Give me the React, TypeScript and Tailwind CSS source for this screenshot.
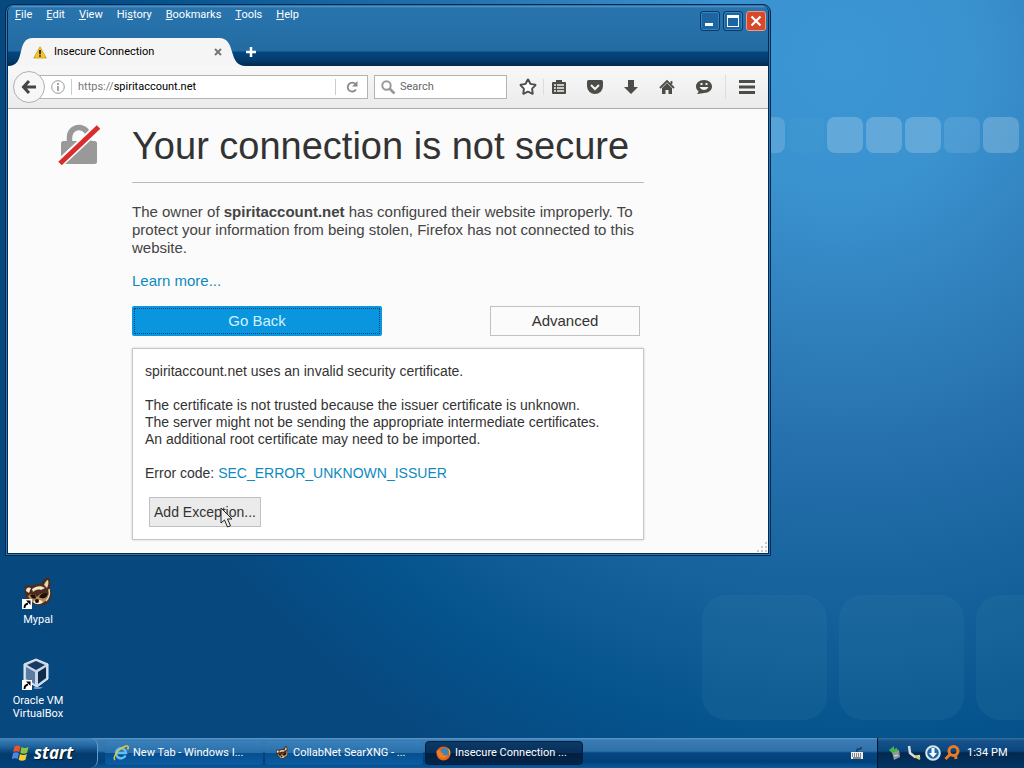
import React from "react";
import { Star } from "lucide-react";

const menuItems = ["File", "Edit", "View", "History", "Bookmarks", "Tools", "Help"];
const underlined = [0, 0, 0, 2, 0, 0, 0];

const tiles = [
  "bg-white/15",
  "bg-white/2",
  "bg-white/20",
  "bg-white/20",
  "bg-white/20",
  "bg-white/10",
  "bg-white/20",
];

function WarningIcon() {
  return (
    <svg width="14" height="13" viewBox="0 0 14 13">
      <path d="M7 .8 13.3 12H.7Z" fill="#f7c52b" stroke="#c99a1c" strokeWidth=".8" strokeLinejoin="round" />
      <path d="M7 4v4.2M7 9.2v1.6" stroke="#222" strokeWidth="1.8" />
    </svg>
  );
}

function BrokenLock() {
  return (
    <svg width="42" height="42" viewBox="0 0 42 42">
      <path d="M11.500 20v-7a9.500 9.500 0 0 1 19 0v7" fill="none" stroke="#999" strokeWidth="5.500" />
      <rect x="3" y="17" width="36" height="23" rx="2.500" fill="#999" />
      <path d="M1.500 39.500 40.500 3" stroke="#fbfbfb" strokeWidth="8.500" />
      <path d="M2 39.500 40.500 3" stroke="#d92d2d" strokeWidth="5" />
    </svg>
  );
}

function Raccoon({ size }: { size: number }) {
  return (
    <svg width={size} height={size} viewBox="0 0 32 32">
      <path d="M3 13c-1-5 3-6 7-4 3-2 6-3 9-2 2-4 5-7 8-6 2 3 1 7 1 10 3 6 1 13-4 16-6 3-13 1-16-3C4 21 2 18 3 13Z" fill="#4a2d1a" />
      <path d="M22 8c1-3 3-5 4-5 1 3 0 6-1 8Z" fill="#e8d2b4" />
      <path d="M4 14c0-4 3-4 5-3l-2 5ZM10 12c4-3 9-4 13-1l-4 2c-3-1-6 0-8 2Z" fill="#f1e3cc" />
      <path d="M6 19c4-4 7-1 9 1 3-4 8-5 12-2-2 6-6 9-11 9-4 0-8-3-10-8Z" fill="#b98a58" />
      <path d="M8 18c3-2 6 0 6 3-2 2-5 0-6-3ZM17 20c2-4 6-5 9-3-1 4-5 6-9 3Z" fill="#1d120b" />
      <path d="M11 25c3-3 7-3 10 0-3 3-7 3-10 0Z" fill="#f4ead9" />
      <path d="M27 12c1 5 0 9-3 12" fill="none" stroke="#ead9bd" strokeWidth="1.500" />
      <circle cx="15" cy="24" r="2" fill="#160d08" />
    </svg>
  );
}

function VirtualBoxIcon() {
  return (
    <svg width="32" height="32" viewBox="0 0 32 32">
      <path d="m14 1 12 5v15l-11 8-13-7V6Z" fill="#c9d7ea" stroke="#e7eff8" />
      <path d="m14 3 9 4-9 5-9-5Z" fill="#173a5e" />
      <path d="m4 9 9 5v12l-9-5Z" fill="#5b7ba0" />
      <path d="m16 14 8-5v11l-8 6Z" fill="#102c4b" />
      <path d="M12 29h9l-3 2h-6Z" fill="#7295c4" />
    </svg>
  );
}

function ShortcutArrow() {
  return (
    <svg className="absolute bottom-0 left-0" width="10" height="10" viewBox="0 0 10 10">
      <path d="M0 0h10v10H0Z" fill="#fff" />
      <path d="M2.500 9c0-3 1-4 3.500-4.500" stroke="#000" strokeWidth="1.800" fill="none" />
      <path d="M4 1.500h4.500V6Z" fill="#000" />
    </svg>
  );
}

function WindowsFlag() {
  return (
    <svg width="18" height="18" viewBox="0 0 18 18">
      <path d="M2.500 2.500c2-1.300 4-1.300 6 0L7.200 8.300c-2-1.300-4-1.300-6 0Z" fill="#e8532c" />
      <path d="M9.500 3c2 1.300 4.500 1.300 7 0l-1.400 5.800c-2.300 1.200-4.700 1.200-6.800 0Z" fill="#8cc63e" />
      <path d="M1 9.300c2-1.300 4-1.300 6 0l-1.300 5.800c-2-1.300-4-1.300-6 0Z" fill="#4c86e0" />
      <path d="M8 9.900c2 1.300 4.500 1.300 6.900 0l-1.400 5.800c-2.300 1.300-4.800 1.300-6.900 0Z" fill="#f8cd2e" />
    </svg>
  );
}

function IeIcon() {
  return (
    <svg width="16" height="16" viewBox="0 0 16 16">
      <path d="M12.500 10.500A5 5 0 1 1 13 8H4.500" fill="none" stroke="#63c0f2" strokeWidth="2.500" />
      <path d="M2 15C-1 12 6 3 13 1c2-.5 3 1 1.500 3.500" fill="none" stroke="#f2c231" strokeWidth="1.500" />
    </svg>
  );
}

function FirefoxIcon() {
  return (
    <svg width="15" height="15" viewBox="0 0 16 16">
      <circle cx="8" cy="8" r="7.500" fill="#e3611d" />
      <circle cx="9" cy="7" r="4.800" fill="#3f83b5" />
      <path d="M1 4c1 1 2 0 4 1 0 2 1 2 3 3-1 2 2 3 5 1-1 3-4 5-7 4C2 12 0 8 1 4Z" fill="#ef7d22" />
      <path d="M11 2c3 1 4 5 3 8 2-2 2-7-3-8Z" fill="#f9c52e" />
    </svg>
  );
}

function TitleBar() {
  return (
    <header className="flex h-[60px] flex-col rounded-t-md bg-[linear-gradient(#5599cb_0px,#2a74ae_2px,#2671a9_22px,#236ba1_45px,#044681_46px,#033c6d_54px,#022a50_60px)]">
      <div className="flex items-start justify-between pl-[7px]">
        <nav className="flex gap-[14px] pt-[3px] text-[11px] leading-3 text-white">
          {menuItems.map((item, i) => (
            <button key={item} type="button" className="whitespace-nowrap">
              {item.slice(0, underlined[i])}
              <u>{item[underlined[i]]}</u>
              {item.slice(underlined[i] + 1)}
            </button>
          ))}
        </nav>
        <div className="flex gap-[3px] pt-[5px] pr-[2px]">
          <button type="button" aria-label="Minimize" className="flex size-5 items-end rounded-[3px] border border-[#05386b] bg-[#1d65a2] pb-1 pl-1 shadow-[inset_0_0_0_1px_#3984bb]">
            <span className="h-[3px] w-2 bg-white" />
          </button>
          <button type="button" aria-label="Maximize" className="flex size-5 items-center justify-center rounded-[3px] border border-[#05386b] bg-[#1d65a2] shadow-[inset_0_0_0_1px_#3984bb]">
            <span className="size-3 border border-t-[3px] border-white" />
          </button>
          <button type="button" aria-label="Close" className="flex size-5 items-center justify-center rounded-[3px] border border-[#f09a80] bg-[#d9482b]">
            <svg width="12" height="12" viewBox="0 0 12 12">
              <path d="m1.500 1.500 9 9m0-9-9 9" stroke="#fff" strokeWidth="2.200" />
            </svg>
          </button>
        </div>
      </div>
      <div className="mt-auto flex h-7 items-stretch">
        <div className="relative ml-3 flex w-[216px] items-center pr-[14px] pl-[13px]">
          <svg className="absolute inset-0 h-full w-full overflow-visible" viewBox="0 0 216 28" preserveAspectRatio="none">
            <path d="M-12 28C7 28-5 0 13 0H199C217 0 207 28 226 28Z" fill="#f5f5f5" />
          </svg>
          <div className="relative flex flex-1 items-center gap-[7px] text-[11px] text-black">
            <WarningIcon />
            <span className="flex-1">Insecure Connection</span>
            <button type="button" aria-label="Close tab">
              <svg width="8" height="8" viewBox="0 0 8 8">
                <path d="m1 1 6 6m0-6L1 7" stroke="#777" strokeWidth="2" />
              </svg>
            </button>
          </div>
        </div>
        <button type="button" aria-label="New tab" className="relative ml-[9px]">
          <svg width="12" height="12" viewBox="0 0 12 12">
            <path d="M6 1v10M1 6h10" stroke="#fff" strokeWidth="2.500" />
          </svg>
        </button>
      </div>
    </header>
  );
}

function Toolbar() {
  return (
    <div className="flex h-[43px] items-center border-b border-[#aaa] bg-[linear-gradient(#f8f8f8,#ebebeb)] pr-3 pl-[5px]">
      <button type="button" aria-label="Back" className="z-10 flex size-8 items-center justify-center rounded-full border border-[#b0b0b0] bg-[#f7f7f7]">
        <svg width="16" height="16" viewBox="0 0 16 16">
          <path d="M8 2 2.500 8 8 14M3 8h12" fill="none" stroke="#444" strokeWidth="3" />
        </svg>
      </button>
      <div className="-ml-2 flex h-6 flex-1 items-center border border-[#b3b3b3] bg-white pl-[13px] text-[11px]">
        <svg width="14" height="14" viewBox="0 0 14 14">
          <circle cx="7" cy="7" r="6.300" fill="none" stroke="#999" />
          <path d="M7 3v2M7 6v5" stroke="#888" strokeWidth="1.500" />
        </svg>
        <span className="mx-[6px] h-4 w-px bg-[#ccc]" />
        <span className="flex-1 text-[#777]">
          https://<span className="text-black">spiritaccount.net</span>
        </span>
        <button type="button" aria-label="Reload" className="flex h-4 w-8 items-center justify-center border-l border-[#ccc]">
          <svg width="14" height="14" viewBox="0 0 14 14">
            <path d="M11 9.500A4.500 4.500 0 1 1 10.500 4" fill="none" stroke="#888" strokeWidth="1.800" />
            <path d="M12.500 1v5.500H7Z" fill="#888" />
          </svg>
        </button>
      </div>
      <label className="ml-[6px] flex h-6 w-[133px] items-center gap-1 border border-[#b3b3b3] bg-white pl-[6px]">
        <svg className="shrink-0" width="15" height="15" viewBox="0 0 15 15">
          <circle cx="5.500" cy="5.500" r="4.200" fill="none" stroke="#999" strokeWidth="2" />
          <path d="m8.500 8.500 5 5" stroke="#999" strokeWidth="2.600" />
        </svg>
        <input type="text" placeholder="Search" aria-label="Search" className="w-full min-w-0 bg-transparent text-[11px] outline-none placeholder:text-[#666]" />
      </label>
      <div className="ml-3 flex items-center text-[#4c4c48]">
        <button type="button" aria-label="Bookmark this page">
          <Star size={18} strokeWidth={2.5} fill="#fff" />
        </button>
        <button type="button" aria-label="Show bookmarks" className="ml-[6px] border-l border-[#ddd] pl-[7px]">
          <svg width="16" height="16" viewBox="0 0 16 16">
            <path d="M1 4q0-1 1-1h3V1h6v2h3q1 0 1 1v10q0 1-1 1H2q-1 0-1-1Z" fill="currentColor" />
            <path d="M3 6h2m1 0h7M3 9h2m1 0h7M3 12h2m1 0h7" stroke="#f3f3f3" strokeWidth="1.500" />
          </svg>
        </button>
        <button type="button" aria-label="Save to Pocket" className="ml-5">
          <svg width="16" height="16" viewBox="0 0 16 16">
            <path d="M1.500 1h13Q16 1 16 3v4a8 8 0 0 1-16 0V3Q0 1 1.500 1Z" fill="currentColor" />
            <path d="m4 6 4 4 4-4" fill="none" stroke="#f3f3f3" strokeWidth="2" />
          </svg>
        </button>
        <button type="button" aria-label="Downloads" className="ml-5">
          <svg width="16" height="16" viewBox="0 0 16 16">
            <path d="M5 1h6v7h4l-7 7-7-7h4Z" fill="currentColor" />
          </svg>
        </button>
        <button type="button" aria-label="Home" className="ml-5">
          <svg width="16" height="16" viewBox="0 0 16 16">
            <path d="m1 9 7-7 7 7M12.500 5V2" fill="none" stroke="currentColor" strokeWidth="1.800" />
            <path d="m3 9 5-5 5 5v6H9.500v-4h-3v4H3Z" fill="currentColor" />
          </svg>
        </button>
        <button type="button" aria-label="Start a conversation" className="ml-5">
          <svg width="18" height="16" viewBox="0 0 18 16">
            <path d="M9 1c5 0 8 3 8 6.500S14 14 9 14c-2 0-4 1-7 1 1-1 1.500-2 1.500-3C2 11 1 9.500 1 7.500 1 4 4 1 9 1Z" fill="currentColor" />
            <path d="M4.500 8c2 4 7 4 9 0Z" fill="#f3f3f3" />
            <path d="M5.500 5h2m3 0h2" stroke="#f3f3f3" strokeWidth="2" />
          </svg>
        </button>
        <button type="button" aria-label="Open menu" className="ml-3 border-l border-[#ddd] py-1 pl-3">
          <svg width="18" height="16" viewBox="0 0 18 16">
            <path d="M1 2.500h16M1 8h16M1 13.500h16" stroke="currentColor" strokeWidth="3" />
          </svg>
        </button>
      </div>
    </div>
  );
}

function ErrorPage() {
  return (
    <main className="relative flex gap-8 bg-[#fbfbfb] pt-3 pb-[13px] pl-[50px] font-['Liberation_Sans',Arial,sans-serif] text-[#333]">
      <div className="pt-[3px]">
        <BrokenLock />
      </div>
      <div className="w-full max-w-[512px]">
        <h1 className="border-b border-[#bbb] pb-[11px] text-[38px] leading-[50px] whitespace-nowrap">Your connection is not secure</h1>
        <p className="mt-5 text-[15px] leading-[18px] text-[#444]">
          The owner of <b>spiritaccount.net</b> has configured their website improperly. To protect your information from being stolen, Firefox has not connected to this website.
        </p>
        <p className="mt-[15px] text-[15px] leading-[18px]">
          <a href="#learn" className="text-[#0e8ac0]">Learn more...</a>
        </p>
        <div className="mt-4 flex justify-between pr-1 text-[15px]">
          <button type="button" className="h-[30px] w-[250px] rounded-[2px] bg-[#0996de] p-[2px] text-[#d5f0ff]">
            <span className="flex h-full items-center justify-center border border-dotted border-[#05427a]">Go Back</span>
          </button>
          <button type="button" className="h-[30px] w-[150px] border border-[#c1c1c1]">Advanced</button>
        </div>
        <section className="mt-3 border border-[#c8c8c8] bg-white p-3 pt-[14px] text-[14px] leading-[17px] shadow-[0_0_2px_#ccc]">
          <p>spiritaccount.net uses an invalid security certificate.</p>
          <p className="mt-[17px] whitespace-nowrap">
            The certificate is not trusted because the issuer certificate is unknown.
            <br />
            The server might not be sending the appropriate intermediate certificates.
            <br />
            An additional root certificate may need to be imported.
          </p>
          <p className="mt-[17px]">
            Error code: <a href="#code" className="text-[#0e8ac0]">SEC_ERROR_UNKNOWN_ISSUER</a>
          </p>
          <div className="relative mt-[15px] ml-1 w-28">
            <button type="button" className="h-[30px] w-full border border-[#c1c1c1] bg-[#ebebeb] whitespace-nowrap">Add Exception...</button>
            <svg className="absolute top-[10px] left-[71px]" width="14" height="22" viewBox="0 0 14 22">
              <path d="M1 1v15l3.500-3 3 7 3-1.300-3-6.700H12Z" fill="#eee" stroke="#222" />
            </svg>
          </div>
        </section>
      </div>
      <svg className="absolute right-0 bottom-0" width="12" height="12" viewBox="0 0 12 12">
        <path d="M9 1h2v2H9ZM5 5h2v2H5ZM9 5h2v2H9ZM1 9h2v2H1ZM5 9h2v2H5ZM9 9h2v2H9Z" fill="#ccc" />
      </svg>
    </main>
  );
}

function Taskbar() {
  return (
    <footer className="flex h-[30px] items-stretch bg-[linear-gradient(#5f9dce_0px,#3b7bb3_2px,#2f72ab_13px,#064781_15px,#03407a_24px,#0b5a9c_30px)] text-[11px] text-white">
      <button type="button" className="flex w-[98px] items-center gap-1 rounded-r-lg border-r border-[#5f9dce] bg-[linear-gradient(#4384ba_0px,#20659f_8px,#043a6c_16px,#03417a_30px)] pl-3 font-['Open_Sans',sans-serif] text-[17px] font-bold italic [text-shadow:1px_1px_1px_#012]">
        <WindowsFlag />
        start
      </button>
      <div className="flex flex-1 items-stretch pl-[7px]">
        <button type="button" className="my-[3px] flex w-[158px] items-center gap-1 rounded-sm bg-[linear-gradient(#3a80ba,#296fa9_48%,#07508f_52%,#0c5ba3)] pl-2">
          <IeIcon />
          New Tab - Windows I...
        </button>
        <button type="button" className="my-[3px] ml-[2px] flex w-[158px] items-center gap-1 rounded-sm bg-[linear-gradient(#3a80ba,#296fa9_48%,#07508f_52%,#0c5ba3)] pl-[10px]">
          <Raccoon size={14} />
          CollabNet SearXNG - ...
        </button>
        <button type="button" className="my-[3px] ml-[2px] flex w-[158px] items-center gap-1 rounded-sm border border-[#011f40] bg-[linear-gradient(#0c3a66,#07305a_48%,#021e40_52%,#03264c)] pl-[10px]">
          <FirefoxIcon />
          Insecure Connection ...
        </button>
      </div>
      <div className="flex w-[34px] items-center pl-2">
        <svg width="12" height="14" viewBox="0 0 12 14">
          <path d="M6 6V3h4V1" fill="none" stroke="#123" />
          <path d="M0 6h12v7H0Z" fill="#eee" />
          <path d="M1 8h10M1 10h10" stroke="#222" strokeDasharray="1 1" />
          <path d="M2 12h8" stroke="#222" />
        </svg>
      </div>
      <div className="flex w-[147px] items-center gap-[3px] border-l border-[#02172e] bg-[linear-gradient(#33719f_0px,#15508a_3px,#0b477f_13px,#02284f_15px,#033565_30px)] pl-[9px]">
        <svg width="16" height="16" viewBox="0 0 16 16">
          <path d="m5 7 7-2 1 7-6 3Z" fill="#909a9a" />
          <path d="M7 1 2 5l4 4V7l5-1-1-3-3 1Z" fill="#43b649" />
          <path d="m7 11 4-1" stroke="#ddd" />
        </svg>
        <svg width="16" height="16" viewBox="0 0 16 16">
          <path d="M3 1 4 8l5 4 5-1" fill="none" stroke="#d8dde0" strokeWidth="2.500" />
          <path d="m9 11 5 3" stroke="#ddd15c" strokeWidth="2.500" />
        </svg>
        <svg width="16" height="16" viewBox="0 0 16 16">
          <circle cx="8" cy="8" r="6.800" fill="#1d6aa8" stroke="#d9e6ef" strokeWidth="2" />
          <path d="M6.500 3h3v5H12l-4 4.500L4 8h2.500Z" fill="#fff" />
        </svg>
        <svg width="16" height="16" viewBox="0 0 16 16">
          <circle cx="9.500" cy="6" r="4.500" fill="none" stroke="#ed7a20" strokeWidth="3" />
          <path d="m6.500 9-5 5M11.500 10l.5 4" stroke="#ed7a20" strokeWidth="3" />
        </svg>
        <time className="ml-1 whitespace-nowrap">1:34 PM</time>
      </div>
    </footer>
  );
}

export default function App() {
  return (
    <div className="relative flex min-h-screen flex-col overflow-hidden bg-[radial-gradient(circle_at_82%_8%,#3c96d4_0%,#3a92cf_12%,#3182be_23%,#2671ad_35%,#17639e_48%,#05538d_62%,#07487f_72%)] font-[Roboto,'Open_Sans',Tahoma,sans-serif]">
      <div className="absolute top-[117px] right-[5px] flex gap-[3px]">
        {tiles.map((tone, i) => (
          <div key={i} className={`size-9 rounded-lg ${tone}`} />
        ))}
      </div>
      <div className="absolute top-[595px] left-[702px] flex gap-3">
        {[0, 1, 2].map(n => (
          <div key={n} className="size-[125px] rounded-3xl bg-[#4292aa]/13" />
        ))}
      </div>

      <div className="relative mt-1 ml-[5px] w-[calc(75%-2px)] rounded-t-lg border border-[#04284d] bg-[#2b78b2] p-px">
        <div className="rounded-t-md border border-t-0 border-[#022a50]">
          <TitleBar />
          <Toolbar />
          <ErrorPage />
        </div>
      </div>

      <div className="relative flex flex-1 flex-col items-start gap-8 pt-[21px] pb-2 text-[11px] leading-[13px] text-white">
        <a href="#mypal" className="flex w-[76px] flex-col items-center gap-1 text-center">
          <span className="relative">
            <Raccoon size={32} />
            <ShortcutArrow />
          </span>
          Mypal
        </a>
        <a href="#virtualbox" className="flex w-[76px] flex-col items-center gap-1 text-center">
          <span className="relative">
            <VirtualBoxIcon />
            <ShortcutArrow />
          </span>
          Oracle VM VirtualBox
        </a>
      </div>

      <Taskbar />
    </div>
  );
}
